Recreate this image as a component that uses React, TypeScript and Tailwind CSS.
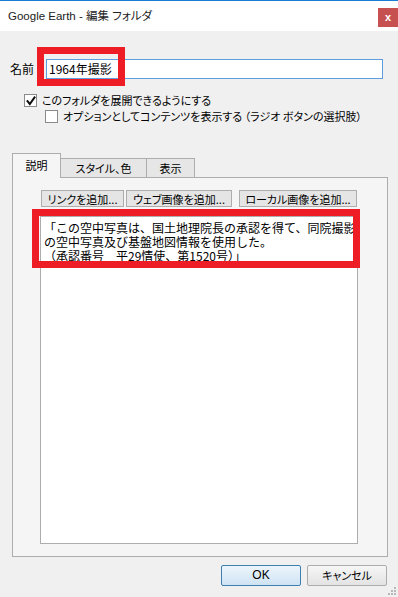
import React from "react";

const jp = "[font-family:'Noto_Sans_CJK_JP',sans-serif]";

function Check({ checked }: { checked: boolean }) {
  return (
    <div className="w-[13px] h-[13px] border border-[#8a8a8a] bg-white flex items-center justify-center shrink-0">
      {checked && (
        <svg width="10" height="10" viewBox="0 0 10 10">
          <path d="M1.5 5.2 L3.8 8 L8.5 1.5" stroke="#111" strokeWidth="2" fill="none" strokeLinecap="square" />
        </svg>
      )}
    </div>
  );
}

export default function App() {
  return (
    <div className={`relative w-[398px] h-[597px] bg-[#f0f0f0] border-t border-[#1a7fd4] flex flex-col text-[12px] text-black overflow-hidden ${jp}`}>
      {/* title bar */}
      <div className="h-[30px] bg-white flex justify-between shrink-0">
        <div className="pl-[8px] pt-[7px] text-[11.5px] leading-[16px] text-[#222] [font-family:'Liberation_Sans','Noto_Sans_CJK_JP',sans-serif] [font-feature-settings:'palt']">
          Google Earth - 編集 フォルダ
        </div>
        <div className="mt-[7px] w-[20px] h-[19px] bg-[#c75050] text-white text-[11px] font-bold leading-none flex items-center justify-center [font-family:'Liberation_Sans',sans-serif]">
          x
        </div>
      </div>

      {/* name row */}
      <div className="mt-[28px] flex items-center pl-[10px] h-[20px]">
        <div className="w-[36px] leading-[16px]">名前</div>
        <div className="w-[337px] h-[20px] border border-[#5c9ee0] bg-white flex items-center pl-[2px] leading-[16px]">
          1964年撮影
        </div>
      </div>

      {/* checkboxes */}
      <div className="mt-[15px] flex items-center h-[13px] pl-[24px] gap-[5px] text-[11px] [font-feature-settings:'palt']">
        <Check checked />
        <span className="leading-[15px]">このフォルダを展開できるようにする</span>
      </div>
      <div className="mt-[3px] flex items-center h-[13px] pl-[45px] gap-[5px] text-[11px] [font-feature-settings:'palt']">
        <Check checked={false} />
        <span className="leading-[15px]">オプションとしてコンテンツを表示する （ラジオ ボタンの選択肢）</span>
      </div>

      {/* tabs */}
      <div className="mt-[31px] ml-[12px] flex items-end h-[24px] relative z-10 text-[11px] [font-feature-settings:'palt']">
        <div className="w-[49px] h-[25px] border border-b-0 border-[#adadad] bg-[#f5f5f5] flex items-center justify-center leading-[15px] pb-[1px]">
          説明
        </div>
        <div className="w-[86px] h-[20px] border border-l-0 border-[#adadad] bg-[#e6e6e6] flex items-center justify-center leading-[15px]">
          スタイル、色
        </div>
        <div className="w-[48px] h-[20px] border border-l-0 border-[#adadad] bg-[#e6e6e6] flex items-center justify-center leading-[15px]">
          表示
        </div>
      </div>

      {/* panel */}
      <div className="ml-[12px] w-[376px] h-[380px] -mt-[1px] border border-[#adadad] bg-[#f5f5f5] flex flex-col">
        <div className="mt-[12px] pl-[28px] flex h-[17px] text-[11px] [font-feature-settings:'palt']">
          <div className="w-[83px] h-[17px] border border-[#adadad] bg-[#e5e5e5] flex items-center justify-center leading-[14px]">
            リンクを追加...
          </div>
          <div className="ml-[2px] w-[106px] h-[17px] border border-[#adadad] bg-[#e5e5e5] flex items-center justify-center leading-[14px]">
            ウェブ画像を追加...
          </div>
          <div className="ml-[7px] w-[118px] h-[17px] border border-[#adadad] bg-[#e5e5e5] flex items-center justify-center leading-[14px]">
            ローカル画像を追加...
          </div>
        </div>
        <div className="mt-[9px] ml-[27px] w-[318px] h-[328px] border border-[#adadad] bg-white pl-[3px] pt-[4px] text-[12px]">
          <div className="h-[14px] leading-[14px] whitespace-nowrap">「この空中写真は、国土地理院長の承認を得て、同院撮影</div>
          <div className="h-[14px] leading-[14px] whitespace-nowrap">の空中写真及び基盤地図情報を使用した。</div>
          <div className="h-[14px] leading-[14px] whitespace-nowrap">（承認番号　平29情使、第1520号）」</div>
        </div>
      </div>

      {/* bottom buttons */}
      <div className="mt-[8px] flex justify-end pr-[11px] gap-[6px] text-[11px] [font-feature-settings:'palt']">
        <div className="w-[80px] h-[21px] rounded-[2px] border border-[#3c7fb1] bg-gradient-to-b from-[#edf5fc] to-[#cfe3f3] flex items-center justify-center leading-[15px] text-[12px] [font-family:'Liberation_Sans',sans-serif]">
          OK
        </div>
        <div className="w-[80px] h-[21px] rounded-[2px] border border-[#acacac] bg-gradient-to-b from-[#f6f6f6] to-[#e3e3e3] flex items-center justify-center leading-[15px]">
          キャンセル
        </div>
      </div>

      {/* resize grip */}
      <svg className="absolute right-[1px] bottom-[1px]" width="10" height="10" viewBox="0 0 10 10">
        <g fill="#b8b8b8">
          <rect x="7" y="1" width="2" height="2" />
          <rect x="4" y="4" width="2" height="2" />
          <rect x="7" y="4" width="2" height="2" />
          <rect x="1" y="7" width="2" height="2" />
          <rect x="4" y="7" width="2" height="2" />
          <rect x="7" y="7" width="2" height="2" />
        </g>
      </svg>

      {/* annotation boxes */}
      <div className="absolute left-[37px] top-[46px] w-[88px] h-[39px] border-[7px] border-[#ee1c25]" />
      <div className="absolute left-[32px] top-[208px] w-[328px] h-[59px] border-[7px] border-[#ee1c25]" />
    </div>
  );
}
